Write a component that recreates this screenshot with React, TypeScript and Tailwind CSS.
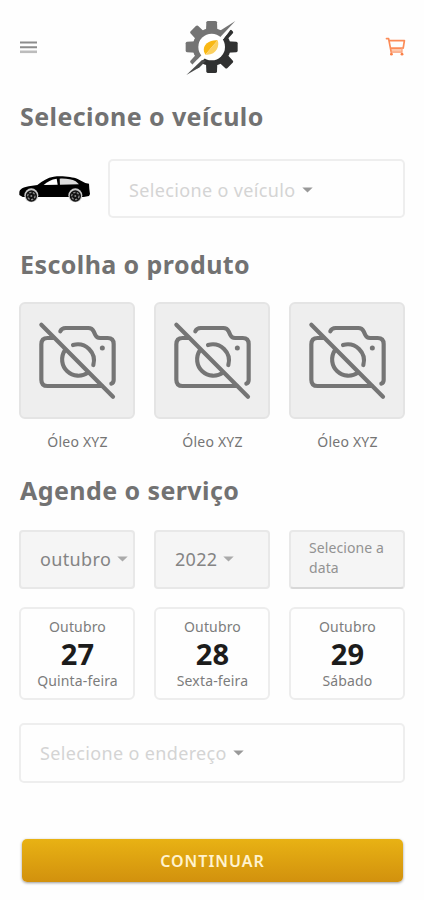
import type { ReactNode } from "react";

const products = ["Óleo XYZ", "Óleo XYZ", "Óleo XYZ"];

const days = [
  { month: "Outubro", day: "27", weekday: "Quinta-feira" },
  { month: "Outubro", day: "28", weekday: "Sexta-feira" },
  { month: "Outubro", day: "29", weekday: "Sábado" },
];

function MenuIcon() {
  return (
    <svg className="h-[13px] w-[17px]" viewBox="0 0 17 13">
      <path d="M0 1.5H17M0 6.2H17" stroke="#8c8c8c" strokeWidth="1.9" />
      <path d="M0 10.8H17" stroke="#bcbcbc" strokeWidth="2.6" />
    </svg>
  );
}

function CartIcon() {
  return (
    <svg className="h-[20px] w-[21px]" viewBox="0 0 21 20" fill="none" stroke="#fc8c58" strokeWidth="1.7" strokeLinecap="round" strokeLinejoin="round">
      <path d="M6 12H17V15.5H6Z" fill="#fdc8ad" stroke="none" />
      <path d="M1.5 1.6H3.6L6.2 15.2M4.2 3.6H19.4L18.2 11.2H5.5" />
      <path d="M6.4 15.2H17V11.5" stroke="#fca37c" strokeWidth="1.3" />
      <circle cx="6.4" cy="17.2" r="1.4" fill="#fb8148" stroke="none" />
      <circle cx="17" cy="17.2" r="1.4" fill="#fb8148" stroke="none" />
    </svg>
  );
}

function Gear({ fill }: { fill: string }) {
  return (
    <g fill={fill}>
      <circle cx="109" cy="111" r="57" />
      {[0, 45, 90, 135].map((a) => (
        <path key={a} transform={`rotate(${a} 109 111)`} d="M92 64L93 37Q94 33 98 33H120Q124 33 125 37L126 64V158L125 185Q124 189 120 189H98Q94 189 93 185L92 158Z" />
      ))}
    </g>
  );
}

function Logo() {
  return (
    <svg className="h-[55px] w-[54px]" viewBox="29 30 162 165">
      <defs>
        <clipPath id="upper">
          <path d="M20 20H138V73L52 163L46 172L20 170Z" />
        </clipPath>
        <clipPath id="lower">
          <path d="M165 60L200 50V200H66V172L82 152L145 87Z" />
        </clipPath>
      </defs>
      <g clipPath="url(#upper)"><Gear fill="#747474" /></g>
      <g clipPath="url(#lower)"><Gear fill="#303131" /></g>
      <path d="M180 33L134 62L126 88L137 79Z" fill="#747474" />
      <path d="M33 195L80 150L92 152L73 172Z" fill="#4a4b4b" />
      <circle cx="109" cy="111" r="40" fill="#fff" />
      <path d="M127 91C108 88 80 101 86 125L90 134Z" fill="#f9b815" />
      <path d="M127 91C134 108 122 138 90 134Z" fill="#fbd060" />
    </svg>
  );
}

function CarIcon() {
  return (
    <svg className="h-[28px] w-[72px]" viewBox="0 0 216 84">
      <path d="M1 53C1 43 12 37 29 34L55 30C72 17 85 8 104 5C131 2 160 6 176 12L199 24L210 26L211 42L213 57L210 63L194 66H55L11 66L1 60Z" fill="#000" />
      <path d="M74 30C85 20 97 13 113 11L116 29Z" fill="#fff" />
      <path d="M122 11C142 10 158 13 170 19L180 28L123 29Z" fill="#dedede" />
      {[37, 169].map((x) => (
        <g key={x}>
          <circle cx={x} cy="61" r="21" fill="#c8c8c8" />
          <circle cx={x} cy="63" r="17" fill="#111" />
          <circle cx={x} cy="63" r="11" fill="none" stroke="#8a8a8a" strokeWidth="4" strokeDasharray="7 4" />
          <circle cx={x} cy="63" r="3" fill="#888" />
        </g>
      ))}
    </svg>
  );
}

function CameraOffIcon() {
  return (
    <svg className="size-[80px]" viewBox="82 241 240 240" fill="none" stroke="#757575" strokeWidth="12.5" strokeLinecap="round" strokeLinejoin="round">
      <path d="M95 252L310 468" />
      <path d="M132 292H114Q95 292 95 311V417Q95 436 114 436H276" />
      <path d="M152 272Q156 262 168 262H236Q247 262 252 272L257 283Q261 292 271 292H294Q312 292 312 310V418Q312 426 305 429" />
      <path d="M190 313A49 49 0 0 1 251 373" />
      <path d="M165 330A49 49 0 0 0 235 396" />
      <circle cx="278" cy="322" r="7.5" fill="#757575" stroke="none" />
    </svg>
  );
}

function Caret({ className }: { className: string }) {
  return (
    <svg className={`mb-px h-[6px] w-[11px] shrink-0 ${className}`} viewBox="0 0 11 6" fill="currentColor">
      <path d="M0.3 0.4H10.7L5.5 5.6Z" />
    </svg>
  );
}

function Heading({ children, className }: { children: ReactNode; className: string }) {
  return <h2 className={`h-[34px] pl-px text-[25px] leading-[34px] font-bold tracking-[0.42px] whitespace-nowrap text-[#727272] ${className}`}>{children}</h2>;
}

export default function App() {
  return (
    <div className="flex h-[900px] w-[424px] flex-col bg-[#fefefe] px-[19px] font-['Noto_Sans','Open_Sans',sans-serif] text-[#757575]">
      <header className="mt-[19px] -mr-px flex h-[56px] items-center justify-between pl-[1px]">
        <MenuIcon />
        <div className="pl-[2px]"><Logo /></div>
        <CartIcon />
      </header>

      <Heading className="mt-[24px]">Selecione o veículo</Heading>
      <div className="mt-[26px] flex h-[59px] items-center gap-[17px]">
        <CarIcon />
        <button className="flex h-[59px] flex-1 items-center rounded-[5px] border-2 border-[#eeeeee] pt-[3px] pl-[19px] text-[18px] tracking-[0.35px] text-[#d4d4d4]">
          <span>Selecione o veículo</span>
          <Caret className="ml-[7px] text-[#999]" />
        </button>
      </div>

      <Heading className="mt-[29px]">Escolha o produto</Heading>
      <div className="mt-[21px] grid grid-cols-3 gap-[19px]">
        {products.map((name, i) => (
          <div key={i} className="flex flex-col items-center">
            <div className="flex h-[117px] w-full items-center justify-center rounded-[6px] border-2 border-[#e4e4e4] bg-[#eee]">
              <CameraOffIcon />
            </div>
            <span className="mt-[13px] h-[20px] pl-px text-[14px] leading-[20px] tracking-[0.2px]">{name}</span>
          </div>
        ))}
      </div>

      <Heading className="mt-[21px]">Agende o serviço</Heading>
      <div className="mt-[23px] grid h-[59px] grid-cols-3 gap-[19px]">
        <button className="flex items-center rounded-[4px] border-2 border-[#e8e8e8] bg-[#f5f5f5] pl-[19px] text-[18px] tracking-[0.35px] text-[#848484]">
          <span>outubro</span>
          <Caret className="ml-[6px] text-[#aaa]" />
        </button>
        <button className="flex items-center rounded-[4px] border-2 border-[#e8e8e8] bg-[#f5f5f5] pl-[19px] text-[18px] tracking-[0.3px] text-[#848484]">
          <span>2022</span>
          <Caret className="ml-[6px] text-[#aaa]" />
        </button>
        <button className="flex items-center rounded-[4px] border-2 border-[#e8e8e8] border-b-[#d8d8d8] bg-[#f5f5f5] pb-[3px] pl-[18px] text-left text-[14px] leading-[20px] tracking-[0.1px] text-[#929292]">
          <span>Selecione a<br />data</span>
        </button>
      </div>

      <div className="mt-[18px] grid h-[93px] grid-cols-3 gap-[19px]">
        {days.map((d) => (
          <button key={d.day} className="flex flex-col items-center rounded-[6px] border-2 border-[#ededed] pt-[8px] pl-px text-[14px] tracking-[0.15px] whitespace-nowrap text-[#7c7c7c]">
            <span className="h-[19px] leading-[20px]">{d.month}</span>
            <span className="h-[35px] text-[29px] leading-[35px] font-bold text-[#1c1c1c]">{d.day}</span>
            <span className="h-[20px] leading-[20px]">{d.weekday}</span>
          </button>
        ))}
      </div>

      <button className="mt-[23px] flex h-[60px] shrink-0 items-center rounded-[5px] border-2 border-[#eeeeee] pt-px pl-[19px] text-[18px] tracking-[0.35px] text-[#d4d4d4]">
        <span>Selecione o endereço</span>
        <Caret className="ml-[6px] text-[#999]" />
      </button>

      <button className="mr-[2px] ml-[3px] mt-[56px] h-[43px] shrink-0 rounded-[5px] bg-linear-to-b from-[#e8b214] to-[#d2910d] text-[16px] font-semibold tracking-[1px] text-[#fff3cf] shadow-[0_1px_3px_rgba(0,0,0,0.4)]">
        CONTINUAR
      </button>
    </div>
  );
}
